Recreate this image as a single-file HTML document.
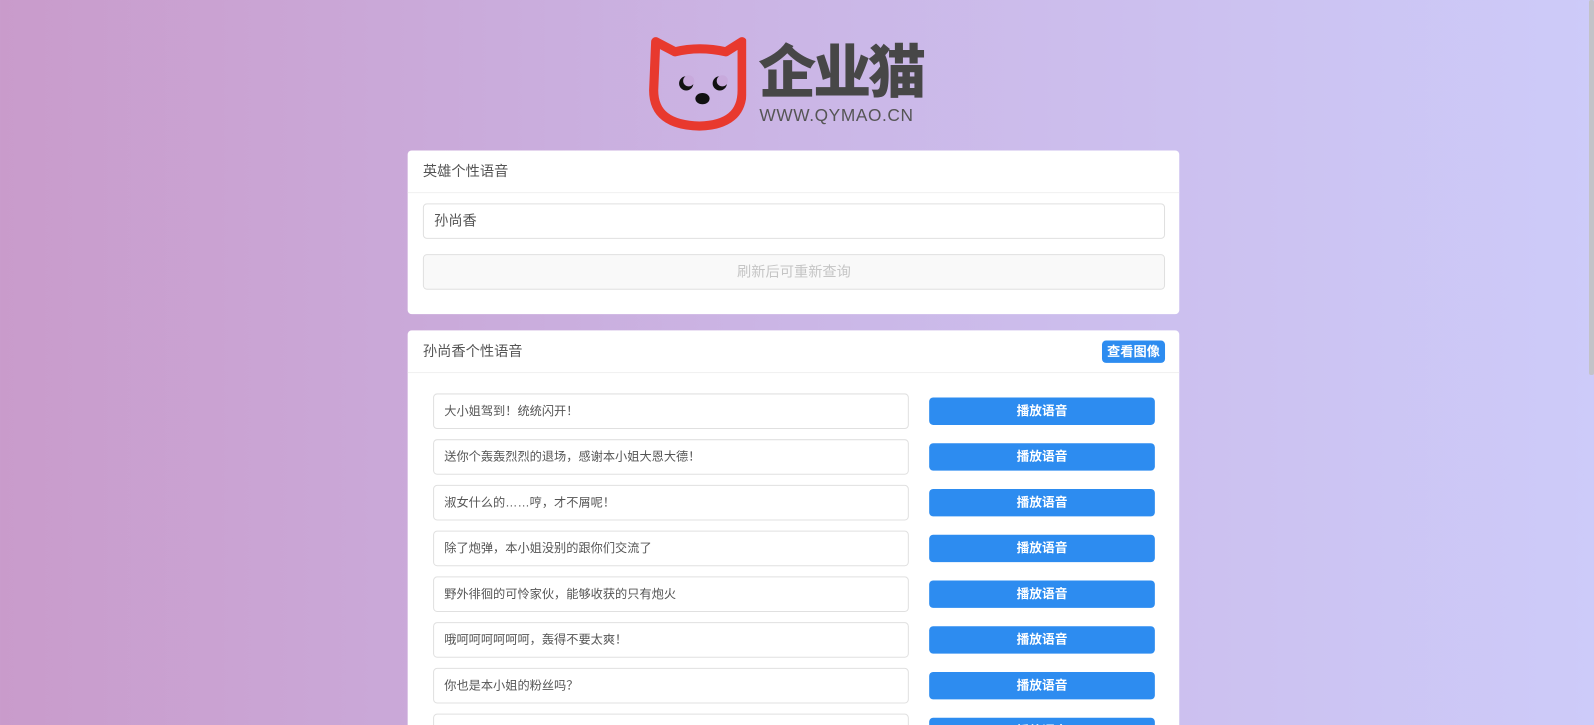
<!DOCTYPE html>
<html><head><meta charset="utf-8"><style>
html,body{margin:0;padding:0;width:1594px;height:725px;overflow:hidden;}
body{background:linear-gradient(90deg,#c99bcb 0%,#cbb6e6 50%,#cdcbf9 100%);font-family:"Liberation Sans","Noto Sans CJK SC",sans-serif;position:relative;}
.sb{position:absolute;right:0;top:0;width:5px;height:375px;background:#c3c3c8;border-radius:2px;}
#wrap{position:absolute;left:0;top:0;width:1568px;height:725px;transform:scale(1.0166);transform-origin:0 0;}
.card{position:absolute;left:401px;width:759px;background:#fff;border-radius:4px;}
.hd{height:41px;border-bottom:1px solid #f0f0f0;font-size:14px;color:#555;line-height:41px;padding-left:15px;position:relative;}
.inp{position:absolute;border:1px solid #e0e0e0;border-radius:4px;box-sizing:border-box;font-size:12px;color:#555;padding-left:10px;}
.btn{position:absolute;background:#2d8cf0;color:#fff;border-radius:4px;text-align:center;font-size:12.5px;font-weight:bold;}
</style></head><body>
<div class="sb"></div>
<div id="wrap">
<svg style="position:absolute;left:630px;top:35px" width="104" height="94" viewBox="0 0 104 94">
<path d="M15 6 L34 16 Q58 10 84 16 L100 6 L100 54 Q100 88 58 89 Q13 88 13 54 Z" fill="none" stroke="#e8392e" stroke-width="9" stroke-linejoin="round"/>
<circle cx="45" cy="47" r="7" fill="#111"/><circle cx="47.5" cy="44.5" r="5.5" fill="#c8aadc"/>
<circle cx="78" cy="47" r="7" fill="#111"/><circle cx="80.5" cy="44.5" r="5.5" fill="#c8aadc"/>
<ellipse cx="61" cy="62" rx="7" ry="5.5" fill="#111"/>
</svg>
<div style="position:absolute;left:746px;top:32px;font-size:57px;font-weight:900;color:#474747;letter-spacing:-3px;font-family:'Noto Sans CJK SC',sans-serif;line-height:70px;">企业猫</div>
<div style="position:absolute;left:747px;top:104px;font-size:17px;color:#555;letter-spacing:0.6px;">WWW.QYMAO.CN</div>

<div class="card" style="top:148px;height:161px;">
<div class="hd">英雄个性语音</div>
<div class="inp" style="left:15px;top:52px;width:730px;height:35px;line-height:33px;font-size:14px;">孙尚香</div>
<div class="inp" style="left:15px;top:102px;width:730px;height:35px;line-height:33px;background:#f9f9f9;color:#c5c5c5;text-align:center;padding:0;font-size:14px;">刷新后可重新查询</div>
</div>

<div class="card" style="top:325px;height:420px;">
<div class="hd">孙尚香个性语音<span style="position:absolute;right:14px;top:10px;background:#2d8cf0;color:#fff;font-size:13px;font-weight:bold;line-height:22px;padding:0 5px;border-radius:4px;">查看图像</span></div>
</div>
<div class="inp" style="left:426px;top:387px;width:468px;height:35px;line-height:33px;background:#fff;">大小姐驾到！统统闪开！</div><div class="btn" style="left:914px;top:391px;width:222px;height:27px;line-height:27px;">播放语音</div>
<div class="inp" style="left:426px;top:432px;width:468px;height:35px;line-height:33px;background:#fff;">送你个轰轰烈烈的退场，感谢本小姐大恩大德！</div><div class="btn" style="left:914px;top:436px;width:222px;height:27px;line-height:27px;">播放语音</div>
<div class="inp" style="left:426px;top:477px;width:468px;height:35px;line-height:33px;background:#fff;">淑女什么的……哼，才不屑呢！</div><div class="btn" style="left:914px;top:481px;width:222px;height:27px;line-height:27px;">播放语音</div>
<div class="inp" style="left:426px;top:522px;width:468px;height:35px;line-height:33px;background:#fff;">除了炮弹，本小姐没别的跟你们交流了</div><div class="btn" style="left:914px;top:526px;width:222px;height:27px;line-height:27px;">播放语音</div>
<div class="inp" style="left:426px;top:567px;width:468px;height:35px;line-height:33px;background:#fff;">野外徘徊的可怜家伙，能够收获的只有炮火</div><div class="btn" style="left:914px;top:571px;width:222px;height:27px;line-height:27px;">播放语音</div>
<div class="inp" style="left:426px;top:612px;width:468px;height:35px;line-height:33px;background:#fff;">哦呵呵呵呵呵呵，轰得不要太爽！</div><div class="btn" style="left:914px;top:616px;width:222px;height:27px;line-height:27px;">播放语音</div>
<div class="inp" style="left:426px;top:657px;width:468px;height:35px;line-height:33px;background:#fff;">你也是本小姐的粉丝吗？</div><div class="btn" style="left:914px;top:661px;width:222px;height:27px;line-height:27px;">播放语音</div>
<div class="inp" style="left:426px;top:702px;width:468px;height:35px;line-height:33px;background:#fff;"></div><div class="btn" style="left:914px;top:706px;width:222px;height:27px;line-height:27px;">播放语音</div>
</div>
</body></html>
